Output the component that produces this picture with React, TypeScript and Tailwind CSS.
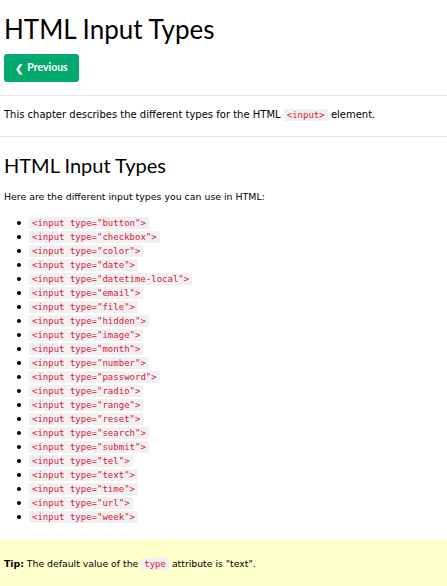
import React from "react";

const types = [
  "button","checkbox","color","date","datetime-local","email","file","hidden","image","month","number","password","radio","range","reset","search","submit","tel","text","time","url","week",
];

const body = { fontFamily: '"DejaVu Sans", Verdana, sans-serif' };

function Code({ children }: { children: React.ReactNode }) {
  return (
    <span className="bg-[#f1f1f1] text-[#dc143c] px-[3px] py-[1px] text-[9px] font-['DejaVu_Sans_Mono',monospace]">
      {children}
    </span>
  );
}

export default function App() {
  return (
    <div className="w-[447px] h-[586px] overflow-hidden bg-white text-black" style={body}>
      <h1 className="mt-[9px] px-[4px] text-[26px] leading-[40px] font-normal font-['Lato',sans-serif]">HTML Input Types</h1>
      <div className="px-[4px] mt-[5px]">
        <button className="w-[75px] h-[28px] rounded-[3px] bg-[#04aa6d] text-white text-[10.5px] font-bold flex items-center justify-center gap-[4px] font-['Lato',sans-serif]">
          <span className="text-[10px]">❮</span><span>Previous</span>
        </button>
      </div>
      <hr className="mt-[13px] border-0 border-t border-[#e7e9eb]" />
      <p className="mt-[11px] px-[4px] text-[10px] leading-[16px]">
        This chapter describes the different types for the HTML <Code>&lt;input&gt;</Code> element.
      </p>
      <hr className="mt-[13px] border-0 border-t border-[#e7e9eb]" />
      <h2 className="mt-[13px] px-[4px] text-[20px] leading-[30px] font-normal font-['Lato',sans-serif]">HTML Input Types</h2>
      <p className="mt-[9px] px-[4px] text-[9.4px] leading-[16px]">Here are the different input types you can use in HTML:</p>
      <ul className="mt-[11px] flex flex-col">
        {types.map((t) => (
          <li key={t} className="flex items-center h-[14px] text-[10px]">
            <span className="ml-[17px] w-[4px] h-[4px] rounded-full bg-black" />
            <span className="ml-[8px] leading-[12px]">
              <Code>&lt;input type="{t}"&gt;</Code>
            </span>
          </li>
        ))}
      </ul>
      <div className="mt-[15px] bg-[#ffffcc] px-[4px] pt-[17px] pb-[20px]">
        <p className="text-[9.3px] leading-[16px]">
          <b>Tip:</b> The default value of the <Code>type</Code> attribute is "text".
        </p>
      </div>
    </div>
  );
}
